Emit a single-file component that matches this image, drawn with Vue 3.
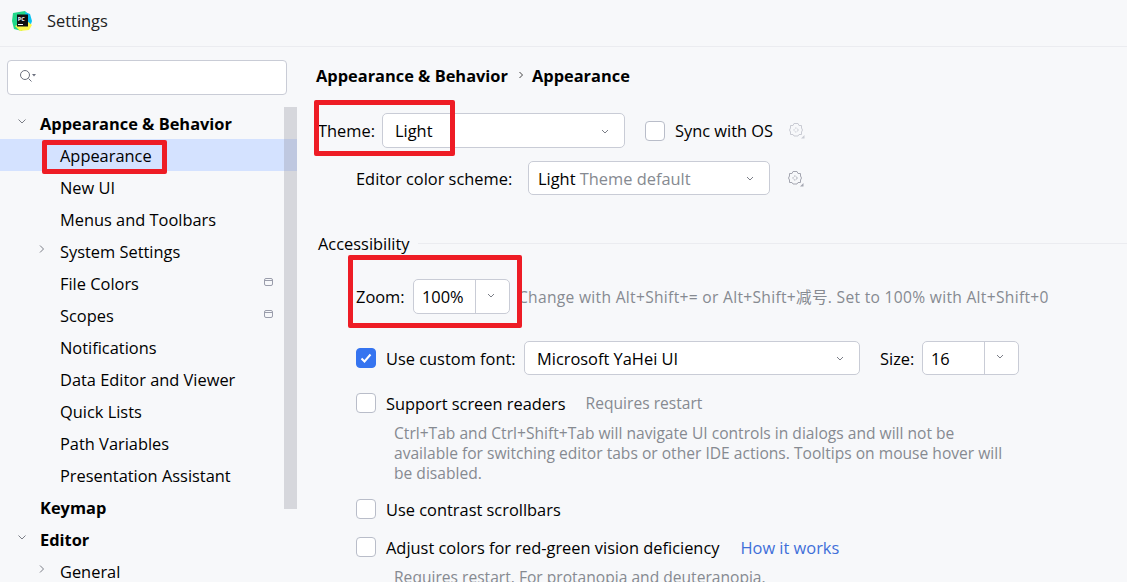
<script setup>
const treeRows = [
  { label: 'Appearance & Behavior', level: 0, open: true },
  { label: 'Appearance', level: 1, selected: true },
  { label: 'New UI', level: 1 },
  { label: 'Menus and Toolbars', level: 1 },
  { label: 'System Settings', level: 1, closed: true },
  { label: 'File Colors', level: 1, badge: true },
  { label: 'Scopes', level: 1, badge: true },
  { label: 'Notifications', level: 1 },
  { label: 'Data Editor and Viewer', level: 1 },
  { label: 'Quick Lists', level: 1 },
  { label: 'Path Variables', level: 1 },
  { label: 'Presentation Assistant', level: 1 },
  { label: 'Keymap', level: 0 },
  { label: 'Editor', level: 0, open: true },
  { label: 'General', level: 1, closed: true }
]
</script>

<template>
  <div class="window">
    <header class="titlebar">
      <svg class="logo" width="20" height="20" viewBox="0 0 20 20">
        <polygon points="1,2 13,0 16,3 10,20 2,18 0,10" fill="#21d789" />
        <polygon points="13,1 18,3 20,10 18,16 14,10" fill="#07c3f2" />
        <polygon points="3,15 15,10 20,14 17,19 8,20" fill="#fcf84a" />
        <rect x="5" y="3.500" width="11" height="12" fill="#111" />
        <text x="5.800" y="9.800" class="logo-text">PC</text>
        <rect x="6" y="13" width="5" height="1" fill="#fff" />
      </svg>
      <span>Settings</span>
    </header>

    <div class="body">
      <aside class="sidebar">
        <div class="search">
          <svg width="18" height="14" viewBox="0 0 18 14" fill="none">
            <circle cx="6" cy="6" r="4.500" stroke="#6c707e" />
            <path d="M9.500 9.500L12.500 12.500" stroke="#6c707e" />
            <path d="M13 5h4l-2 2.500z" fill="#6c707e" />
          </svg>
        </div>
        <div class="tree-wrap">
          <div class="tree">
            <div
              v-for="row in treeRows"
              :key="row.label"
              class="row"
              :class="{ selected: row.selected, top: row.level === 0 }"
            >
              <svg v-if="row.open" class="arrow open" width="10" height="10" viewBox="0 0 10 10" fill="none">
                <path d="M1.500 3.500L5 7l3.500-3.500" stroke="#7b7e87" />
              </svg>
              <svg v-if="row.closed" class="arrow closed" width="10" height="10" viewBox="0 0 10 10" fill="none">
                <path d="M3 1.500L6.500 5 3 8.500" stroke="#7b7e87" />
              </svg>
              <span>{{ row.label }}</span>
              <svg v-if="row.badge" class="badge" width="10" height="9" viewBox="0 0 10 9" fill="none">
                <rect x="0.500" y="0.500" width="8" height="7" rx="1.500" stroke="#9a9dab" />
                <path d="M1 2.500h7" stroke="#9a9dab" />
              </svg>
            </div>
          </div>
          <div class="scrollbar"></div>
        </div>
        <div class="mark mark-appearance"></div>
      </aside>

      <main class="content">
        <div class="crumbs">
          <b>Appearance &amp; Behavior</b>
          <svg width="8" height="10" viewBox="0 0 8 10" fill="none"><path d="M2.500 2L5.500 5 2.500 8" stroke="#444" /></svg>
          <b>Appearance</b>
        </div>

        <div class="line theme-line">
          <label class="theme-label">Theme:</label>
          <div class="combo theme-combo">
            <span>Light</span>
            <svg class="chev" width="10" height="10" viewBox="0 0 10 10" fill="none"><path d="M2 4l3 3 3-3" stroke="#7b7e87" /></svg>
          </div>
          <span class="check sync-check"></span>
          <span class="sync-label">Sync with OS</span>
          <svg class="gear" width="17" height="17" viewBox="0 0 17 17" fill="none">
            <path d="M6 1.500h4l1 2h2.500v2.500l1 2-1 2v2.500h-2.500l-1 1.500h-4l-1-1.500h-2.500v-2.500l-1-2 1-2v-2.500h2.500z" stroke="#c9cbd3" />
            <circle cx="8" cy="8" r="2" stroke="#c9cbd3" stroke-dasharray="1.500 1" />
            <path d="M16.500 13v3.500h-3.500z" fill="#c9cbd3" />
          </svg>
        </div>

        <div class="line scheme-line">
          <label class="scheme-label">Editor color scheme:</label>
          <div class="combo scheme-combo">
            <span>Light <em>Theme default</em></span>
            <svg class="chev" width="10" height="10" viewBox="0 0 10 10" fill="none"><path d="M2 4l3 3 3-3" stroke="#7b7e87" /></svg>
          </div>
          <svg class="gear" width="17" height="17" viewBox="0 0 17 17" fill="none">
            <path d="M6 1.500h4l1 2h2.500v2.500l1 2-1 2v2.500h-2.500l-1 1.500h-4l-1-1.500h-2.500v-2.500l-1-2 1-2v-2.500h2.500z" stroke="#a4a6b0" />
            <circle cx="8" cy="8" r="2" stroke="#a4a6b0" stroke-dasharray="1.500 1" />
            <path d="M16.500 13v3.500h-3.500z" fill="#a4a6b0" />
          </svg>
        </div>

        <div class="section">
          <span>Accessibility</span>
          <div class="section-line"></div>
        </div>

        <div class="line zoom-line">
          <label>Zoom:</label>
          <div class="combo split zoom-combo">
            <span class="split-value">100%</span>
            <span class="split-btn">
              <svg width="10" height="10" viewBox="0 0 10 10" fill="none"><path d="M2 4l3 3 3-3" stroke="#7b7e87" /></svg>
            </span>
          </div>
          <span class="hint zoom-hint">Change with Alt+Shift+= or Alt+Shift+减号. Set to 100% with Alt+Shift+0</span>
        </div>

        <div class="line font-line">
          <span class="check on">
            <svg width="14" height="14" viewBox="0 0 14 14" fill="none"><path d="M2.500 7.500L5.500 10.500 11.500 3.500" stroke="#fff" stroke-width="2" /></svg>
          </span>
          <label class="font-label">Use custom font:</label>
          <div class="combo font-combo">
            <span>Microsoft YaHei UI</span>
            <svg class="chev" width="10" height="10" viewBox="0 0 10 10" fill="none"><path d="M2 4l3 3 3-3" stroke="#7b7e87" /></svg>
          </div>
          <label class="size-label">Size:</label>
          <div class="combo split size-combo">
            <span class="split-value">16</span>
            <span class="split-btn">
              <svg width="10" height="10" viewBox="0 0 10 10" fill="none"><path d="M2 4l3 3 3-3" stroke="#7b7e87" /></svg>
            </span>
          </div>
        </div>

        <div class="line opt readers">
          <span class="check"></span>
          <span>Support screen readers</span>
          <span class="hint restart">Requires restart</span>
        </div>
        <p class="desc">
          Ctrl+Tab and Ctrl+Shift+Tab will navigate UI controls in dialogs and will not be<br />
          available for switching editor tabs or other IDE actions. Tooltips on mouse hover will<br />
          be disabled.
        </p>

        <div class="line opt contrast">
          <span class="check"></span>
          <span>Use contrast scrollbars</span>
        </div>
        <div class="line opt adjust">
          <span class="check"></span>
          <span>Adjust colors for red-green vision deficiency</span>
          <a class="link">How it works</a>
        </div>
        <p class="desc last">Requires restart. For protanopia and deuteranopia.</p>

        <div class="mark mark-theme"></div>
        <div class="mark mark-zoom"></div>
      </main>
    </div>
  </div>
</template>

<style scoped>
.window {
  width: 1127px;
  height: 582px;
  overflow: hidden;
  background: #f7f8fa;
  color: #000;
  font-family: "Open Sans", "Noto Sans CJK SC", sans-serif;
  font-size: 16.4px;
}
.titlebar {
  box-sizing: border-box;
  border-bottom: 1px solid #ebecf0;
  height: 47px;
  display: flex;
  align-items: center;
  padding: 0 0 5px 12px;
  color: #222;
}
.titlebar span { margin-left: 15px; }
.logo-text { font-size: 5.500px; font-weight: 700; fill: #fff; font-family: "Open Sans", sans-serif; }
.body { display: flex; height: 535px; }

.sidebar { width: 297px; position: relative; flex-shrink: 0; }
.search {
  margin: 13px 10px 0 7px;
  height: 35px;
  box-sizing: border-box;
  background: #fff;
  border: 1px solid #c9ccd6;
  border-radius: 4px;
  display: flex;
  align-items: center;
  padding: 0 0 3px 11px;
}
.tree-wrap { display: flex; margin-top: 12px; }
.tree { width: 284px; flex-shrink: 0; }
.row {
  height: 32px;
  width: 297px;
  display: flex;
  align-items: center;
  padding-left: 60px;
  box-sizing: border-box;
  position: relative;
  white-space: nowrap;
}
.row.top { padding-left: 40px; font-weight: 700; }
.row.selected { background: #d4e2ff; }
.arrow { position: absolute; top: 9px; }
.arrow.open { left: 17px; }
.arrow.closed { left: 37px; }
.badge { position: absolute; left: 264px; top: 11px; }
.scrollbar {
  width: 13px;
  height: 402px;
  background: rgba(150, 150, 160, 0.33);
  position: relative;
  z-index: 1;
}

.content { flex: 1; position: relative; padding-left: 19px; }
.crumbs {
  display: flex;
  align-items: center;
  gap: 6px;
  height: 24px;
  margin-top: 16px;
}
.crumbs b { font-weight: 700; }
.crumbs svg { margin: 0 1px 0 3px; }
.line { display: flex; align-items: center; white-space: nowrap; }
.combo {
  display: flex;
  align-items: center;
  justify-content: space-between;
  box-sizing: border-box;
  height: 35px;
  background: #fff;
  border: 1px solid #c9ccd6;
  border-radius: 5px;
  padding: 0 14px 0 12px;
  flex-shrink: 0;
}
.combo em { font-style: normal; color: #868a91; }
.theme-line { margin-top: 26px; height: 35px; }
.theme-label { margin-left: 2px; width: 64px; }
.theme-combo { width: 243px; }
.sync-check { margin-left: 20px; }
.sync-label { margin-left: 10px; }
.gear { margin-left: 15px; }
.scheme-line { margin-top: 13px; height: 34px; padding-left: 40px; }
.scheme-label { width: 172px; }
.scheme-combo { width: 242px; height: 34px; padding-left: 9px; }
.scheme-line .gear { margin-left: 17px; }

.section { display: flex; align-items: center; margin: 37px 0 0 2px; height: 22px; }
.section-line { flex: 1; height: 1px; background: #ebecf0; margin-left: 8px; }

.zoom-line { margin-top: 25px; height: 35px; padding-left: 40px; }
.zoom-line label { width: 57px; }
.split { padding: 0; justify-content: flex-start; }
.split-value { padding-left: 8px; flex: 1; }
.split-btn {
  width: 34px;
  height: 100%;
  border-left: 1px solid #c9ccd6;
  display: flex;
  align-items: center;
  justify-content: center;
  padding: 0 4px 4px 0;
  box-sizing: border-box;
}
.zoom-combo { width: 97px; }
.hint { color: #868a91; font-size: 15.600px; }
.zoom-hint { margin-left: 8px; letter-spacing: 0.300px; }

.check {
  width: 20px;
  height: 20px;
  box-sizing: border-box;
  background: #fff;
  border: 1px solid #b9bdc9;
  border-radius: 4px;
  flex-shrink: 0;
  display: inline-flex;
  align-items: center;
  justify-content: center;
}
.check.on { background: #3574f0; border-color: #3574f0; }
.font-line { margin-top: 27px; height: 34px; padding-left: 40px; }
.font-label { margin-left: 10px; width: 138px; }
.font-combo { width: 336px; height: 34px; }
.size-label { margin-left: 20px; width: 42px; }
.size-combo { width: 97px; height: 34px; }
.opt { padding-left: 40px; height: 24px; }
.opt > span:nth-child(2) { margin-left: 10px; }
.readers { margin-top: 16px; }
.restart { margin-left: 20px; }
.desc {
  margin: 8px 0 0 78px;
  font-size: 15.600px;
  line-height: 20px;
  color: #868a91;
  white-space: nowrap;
}
.contrast { margin-top: 14px; }
.adjust { margin-top: 14px; }
.link { margin-left: 21px; color: #3f6fd9; }

.mark {
  position: absolute;
  box-sizing: border-box;
  border: 5px solid #ee1c25;
  border-radius: 2px;
  pointer-events: none;
  z-index: 2;
}
.mark-appearance { left: 42px; top: 93px; width: 125px; height: 34px; }
.mark-theme { left: 17px; top: 53px; width: 141px; height: 56px; }
.mark-zoom { left: 51px; top: 208px; width: 174px; height: 73px; }
</style>

<style>
html, body { background: #f7f8fa; overflow: hidden; }
</style>
